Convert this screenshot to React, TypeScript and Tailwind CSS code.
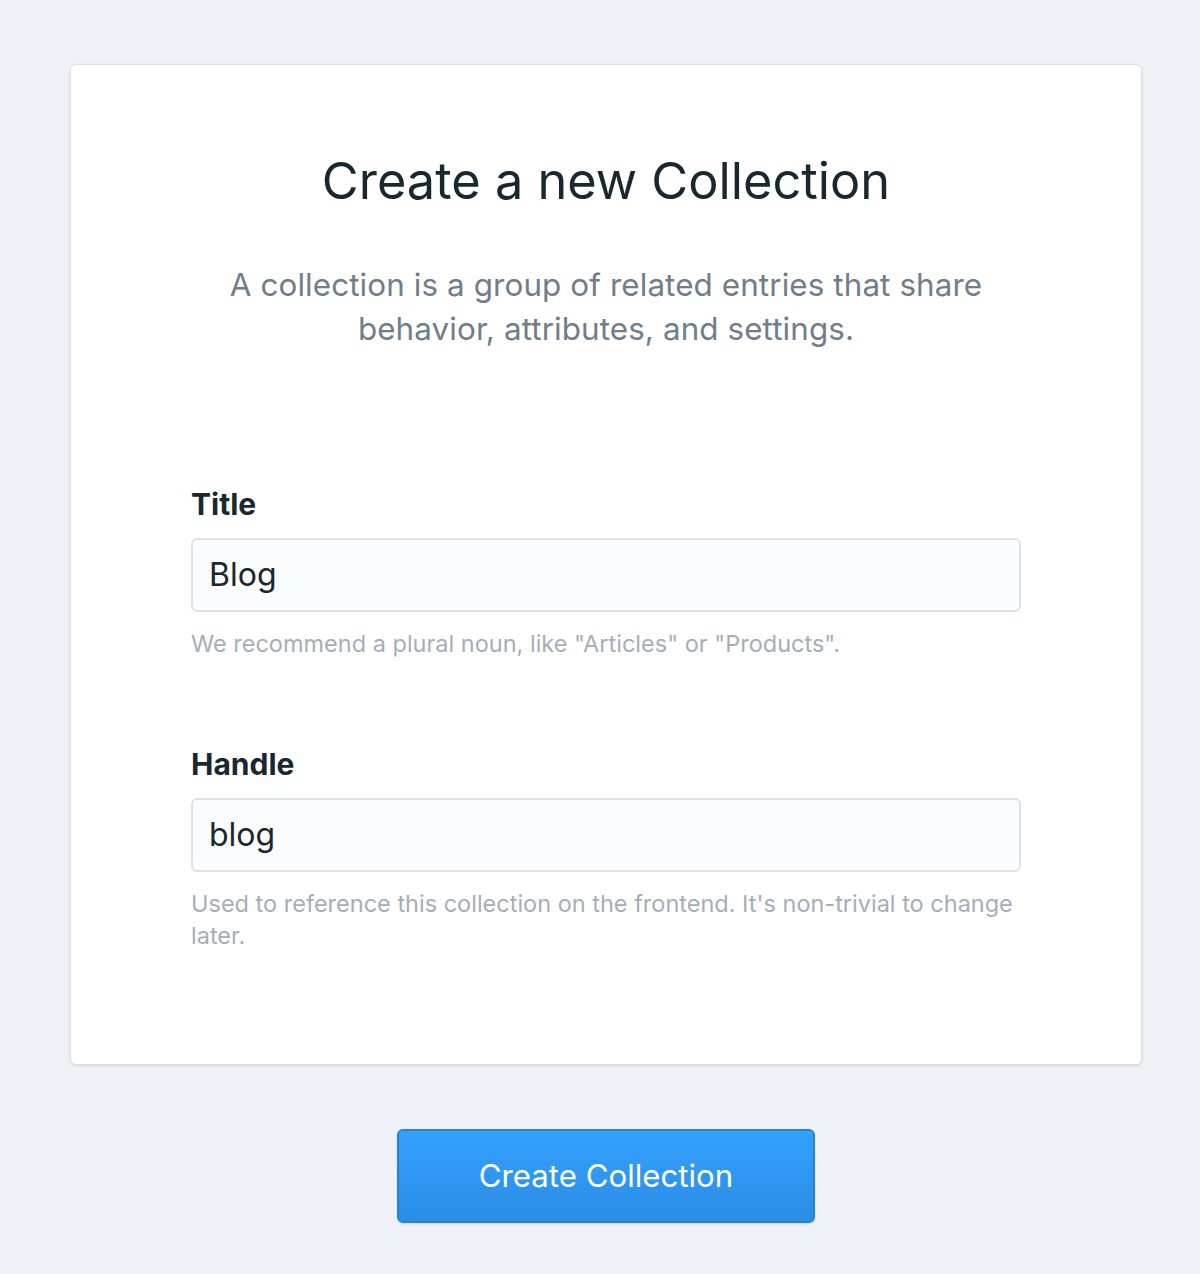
export default function App() {
  return (
    <div
      className="min-h-[1274px] w-full bg-[#eef1f5] flex flex-col items-center pt-[64px] pl-[12px]"
      style={{ fontFamily: "Inter, 'Noto Sans', sans-serif" }}
    >
      <div className="w-[1072px] bg-white rounded-[6px] border border-[#dde1e6] shadow-[0_1px_3px_rgba(40,50,60,0.14)] px-[120px] pt-[86px] pb-[112px]">
        <h1 className="text-center text-[50.5px] leading-[60px] text-[#19272f] font-normal">
          Create a new Collection
        </h1>
        <p className="mt-[52px] text-center text-[31.4px] leading-[44px] text-[#707d8a] tracking-[0.1px]">
          A collection is a group of related entries that share
          <br />
          behavior, attributes, and settings.
        </p>
        <div className="mt-[135px]">
          <label className="block text-[30px] leading-[36px] font-bold text-[#19272f]">Title</label>
          <div className="mt-[16px] h-[74px] rounded-[6px] border-2 border-[#dde2e7] bg-[#fafcfe] flex items-center px-[16px] text-[32px] text-[#19272f]">
            Blog
          </div>
          <p className="mt-[16px] text-[23.5px] leading-[32px] text-[#a5aeb7]">
            We recommend a plural noun, like "Articles" or "Products".
          </p>
        </div>
        <div className="mt-[86px]">
          <label className="block text-[30px] leading-[36px] font-bold text-[#19272f]">Handle</label>
          <div className="mt-[16px] h-[74px] rounded-[6px] border-2 border-[#dde2e7] bg-[#fafcfe] flex items-center px-[16px] text-[32px] text-[#19272f]">
            blog
          </div>
          <p className="mt-[16px] text-[23.5px] leading-[32px] text-[#a5aeb7]">
            Used to reference this collection on the frontend. It's non-trivial to change later.
          </p>
        </div>
      </div>
      <button className="mt-[64px] w-[418px] h-[94px] rounded-[6px] border-2 border-[#2a81d4] bg-gradient-to-b from-[#34a1fd] to-[#2a8de6] text-white text-[31.2px] shadow-[0_1px_2px_rgba(0,0,0,0.1)]">
        Create Collection
      </button>
    </div>
  );
}
